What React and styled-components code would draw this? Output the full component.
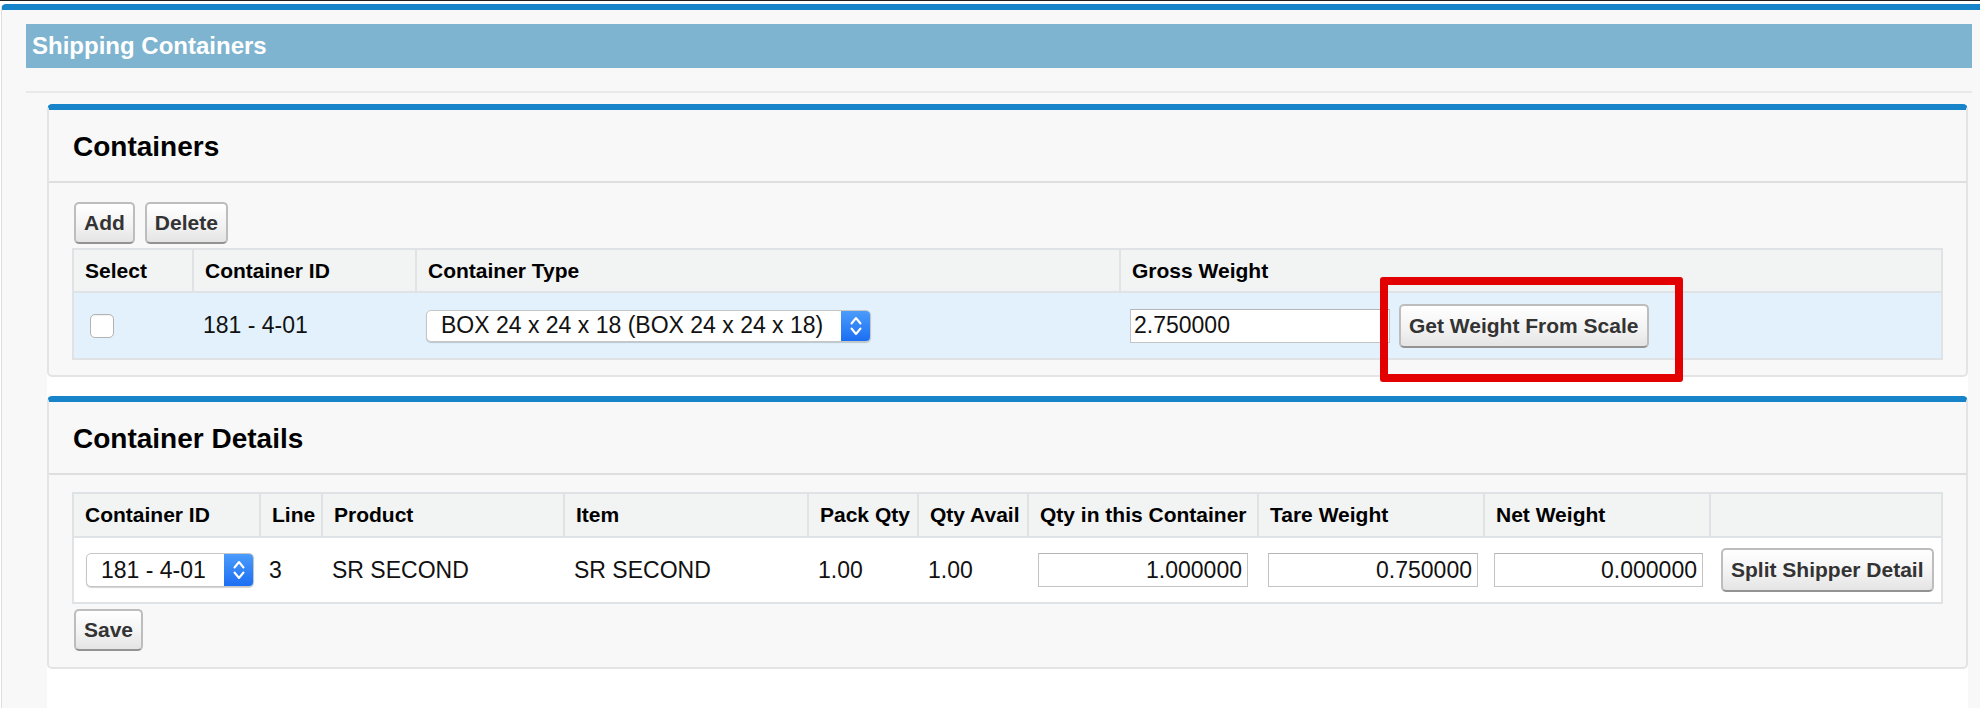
import React from "react";
import styled, { createGlobalStyle } from "styled-components";

const BLUE = "#1783c8";
const FONT = `"Liberation Sans", Arial, Helvetica, sans-serif`;

const GlobalStyle = createGlobalStyle`
  html, body { margin: 0; padding: 0; background: #ffffff; }
  body { font-family: ${FONT}; color: #111; }
  * { box-sizing: border-box; }
`;

const Page = styled.div`
  display: flex;
  flex-direction: column;
  min-height: 100vh;
`;

const TopStrip = styled.div`
  height: 1px;
  background: #222;
  margin-bottom: 3px;
`;

const Outer = styled.div`
  flex: 1;
  display: flex;
  flex-direction: column;
  margin-left: 1px;
  background: #f8f8f8;
  border-top: 6px solid ${BLUE};
  border-left: 1px solid #dedede;
  border-top-left-radius: 5px;
  padding: 14px 8px 0 24px;
`;

const SectionHeader = styled.h1`
  margin: 0;
  height: 44px;
  display: flex;
  align-items: center;
  padding-left: 6px;
  background: #7eb4d0;
  color: #ffffff;
  font: bold 24px ${FONT};
`;

const Divider = styled.div`
  margin-top: 23px;
  height: 2px;
  background: #e9e9e9;
`;

const Body = styled.div`
  flex: 1;
  margin: 11px 4px 0 21px;
  background: #ffffff;
  display: flex;
  flex-direction: column;
  gap: 19px;
`;

const Panel = styled.section`
  background: #f8f8f8;
  border: 2px solid #e4e4e4;
  border-top: 6px solid ${BLUE};
  border-radius: 5px;
`;

const PanelHeader = styled.div`
  height: 73px;
  display: flex;
  align-items: center;
  padding-left: 24px;
  padding-top: 2px;
  border-bottom: 2px solid #dedede;
`;

const PanelTitle = styled.h2`
  margin: 0;
  font: bold 28px ${FONT};
  color: #000;
`;

const PanelBody = styled.div`
  padding: ${(p) => p.$pad};
`;

const ButtonRow = styled.div`
  display: flex;
  gap: 10px;
  padding-left: 2px;
  margin-bottom: ${(p) => p.$mb || 0}px;
  margin-top: ${(p) => p.$mt || 0}px;
`;

const Button = styled.button`
  height: ${(p) => (p.$tall ? 44 : 42)}px;
  padding: 0 8px;
  font: bold 21px ${FONT};
  color: #333;
  background: linear-gradient(#ffffff, #f3f3f3 55%, #e4e4e4);
  border: 2px solid #bdbdbd;
  border-bottom-color: #939393;
  border-radius: 5px;
  white-space: nowrap;
  cursor: pointer;
`;

const Table = styled.table`
  width: 100%;
  border-collapse: collapse;
  table-layout: fixed;
  border: 2px solid #e0e3e6;
`;

const Th = styled.th`
  height: ${(p) => p.$h}px;
  padding: 0 11px;
  text-align: left;
  vertical-align: middle;
  font: bold 21px ${FONT};
  color: #000;
  background: #f2f3f3;
  border-left: 2px solid #e0e3e6;
  border-bottom: 2px solid #e0e3e6;
  white-space: nowrap;
  overflow: hidden;
`;

const Td = styled.td`
  height: ${(p) => p.$h}px;
  padding: 0 ${(p) => p.$pr ?? 10}px 0 ${(p) => p.$pl ?? 10}px;
  vertical-align: middle;
  font: 23px ${FONT};
  color: #111;
  background: ${(p) => (p.$hl ? "#e2f1fb" : "#ffffff")};
  white-space: nowrap;
`;

const Check = styled.input.attrs({ type: "checkbox" })`
  appearance: none;
  margin: 0;
  display: block;
  width: 24px;
  height: 24px;
  background: #fff;
  border: 1px solid #b3b3b3;
  border-radius: 5px;
  box-shadow: inset 0 1px 1px rgba(0, 0, 0, 0.06);
`;

const SelectBox = styled.div`
  display: flex;
  align-items: stretch;
  width: ${(p) => p.$w}px;
  height: ${(p) => p.$h}px;
  background: #fff;
  border: 1px solid #c6c6c6;
  border-radius: 5px;
  box-shadow: 0 1px 1px rgba(0, 0, 0, 0.18);
  overflow: hidden;
`;

const SelectText = styled.span`
  flex: 1;
  display: flex;
  align-items: center;
  padding-left: 14px;
  font: 23px ${FONT};
  color: #111;
  white-space: nowrap;
  overflow: hidden;
`;

const Stepper = styled.span`
  width: 29px;
  display: flex;
  align-items: center;
  justify-content: center;
  background: linear-gradient(#4b9cfb, #1c6ef3);
`;

const TextInput = styled.input`
  width: ${(p) => p.$w}px;
  height: 34px;
  padding: 0 ${(p) => (p.$right ? 5 : 3)}px;
  font: 23px ${FONT};
  color: #111;
  text-align: ${(p) => (p.$right ? "right" : "left")};
  background: #fff;
  border: 1px solid #c4c4c4;
  border-top-color: #b5b5b5;
  border-radius: 0;
  outline: none;
`;

const CellFlex = styled.div`
  display: flex;
  align-items: center;
  gap: 9px;
`;

const HighlightWrap = styled.span`
  position: relative;
  display: inline-flex;
`;

const Highlight = styled.span`
  position: absolute;
  left: -19px;
  top: -27px;
  width: 303px;
  height: 105px;
  border: 8px solid #e20000;
  border-radius: 3px;
  pointer-events: none;
`;

const Chevrons = () => (
  <svg width="14" height="26" viewBox="0 0 14 26" aria-hidden="true">
    <path d="M2.5 10.5 L7 5 L11.5 10.5" fill="none" stroke="#fff" strokeWidth="2" strokeLinecap="round" strokeLinejoin="round" />
    <path d="M2.5 15.5 L7 21 L11.5 15.5" fill="none" stroke="#fff" strokeWidth="2" strokeLinecap="round" strokeLinejoin="round" />
  </svg>
);

const Select = ({ value, w, h }) => (
  <SelectBox $w={w} $h={h} role="combobox">
    <SelectText>{value}</SelectText>
    <Stepper>
      <Chevrons />
    </Stepper>
  </SelectBox>
);

const containerCols = [120, 223, 704, null];
const detailCols = [187, 62, 242, 244, 110, 110, 230, 226, 226, null];

const detailHeaders = [
  "Container ID",
  "Line",
  "Product",
  "Item",
  "Pack Qty",
  "Qty Avail",
  "Qty in this Container",
  "Tare Weight",
  "Net Weight",
  "",
];

export default function App() {
  return (
    <Page>
      <GlobalStyle />
      <TopStrip />
      <Outer>
        <SectionHeader>Shipping Containers</SectionHeader>
        <Divider />
        <Body>
          <Panel>
            <PanelHeader>
              <PanelTitle>Containers</PanelTitle>
            </PanelHeader>
            <PanelBody $pad="19px 23px 15px 23px">
              <ButtonRow $mb={4}>
                <Button>Add</Button>
                <Button>Delete</Button>
              </ButtonRow>
              <Table>
                <colgroup>
                  {containerCols.map((w, i) => (
                    <col key={i} style={w ? { width: w } : undefined} />
                  ))}
                </colgroup>
                <thead>
                  <tr>
                    <Th $h={43}>Select</Th>
                    <Th $h={43}>Container ID</Th>
                    <Th $h={43}>Container Type</Th>
                    <Th $h={43}>Gross Weight</Th>
                  </tr>
                </thead>
                <tbody>
                  <tr>
                    <Td $h={67} $hl $pl={16}>
                      <Check />
                    </Td>
                    <Td $h={67} $hl>181 - 4-01</Td>
                    <Td $h={67} $hl>
                      <Select value="BOX 24 x 24 x 18 (BOX 24 x 24 x 18)" w={445} h={32} />
                    </Td>
                    <Td $h={67} $hl>
                      <CellFlex>
                        <TextInput $w={260} defaultValue="2.750000" />
                        <HighlightWrap>
                          <Button $tall>Get Weight From Scale</Button>
                          <Highlight />
                        </HighlightWrap>
                      </CellFlex>
                    </Td>
                  </tr>
                </tbody>
              </Table>
            </PanelBody>
          </Panel>

          <Panel>
            <PanelHeader>
              <PanelTitle>Container Details</PanelTitle>
            </PanelHeader>
            <PanelBody $pad="17px 23px 16px 23px">
              <Table>
                <colgroup>
                  {detailCols.map((w, i) => (
                    <col key={i} style={w ? { width: w } : undefined} />
                  ))}
                </colgroup>
                <thead>
                  <tr>
                    {detailHeaders.map((h, i) => (
                      <Th key={i} $h={44}>
                        {h}
                      </Th>
                    ))}
                  </tr>
                </thead>
                <tbody>
                  <tr>
                    <Td $h={66} $pl={12}>
                      <Select value="181 - 4-01" w={168} h={34} />
                    </Td>
                    <Td $h={66} $pl={9}>3</Td>
                    <Td $h={66}>SR SECOND</Td>
                    <Td $h={66}>SR SECOND</Td>
                    <Td $h={66}>1.00</Td>
                    <Td $h={66}>1.00</Td>
                    <Td $h={66}>
                      <TextInput $w={210} $right defaultValue="1.000000" />
                    </Td>
                    <Td $h={66}>
                      <TextInput $w={210} $right defaultValue="0.750000" />
                    </Td>
                    <Td $h={66}>
                      <TextInput $w={209} $right defaultValue="0.000000" />
                    </Td>
                    <Td $h={66} $pl={11}>
                      <Button $tall>Split Shipper Detail</Button>
                    </Td>
                  </tr>
                </tbody>
              </Table>
              <ButtonRow $mt={5}>
                <Button>Save</Button>
              </ButtonRow>
            </PanelBody>
          </Panel>
        </Body>
      </Outer>
    </Page>
  );
}
